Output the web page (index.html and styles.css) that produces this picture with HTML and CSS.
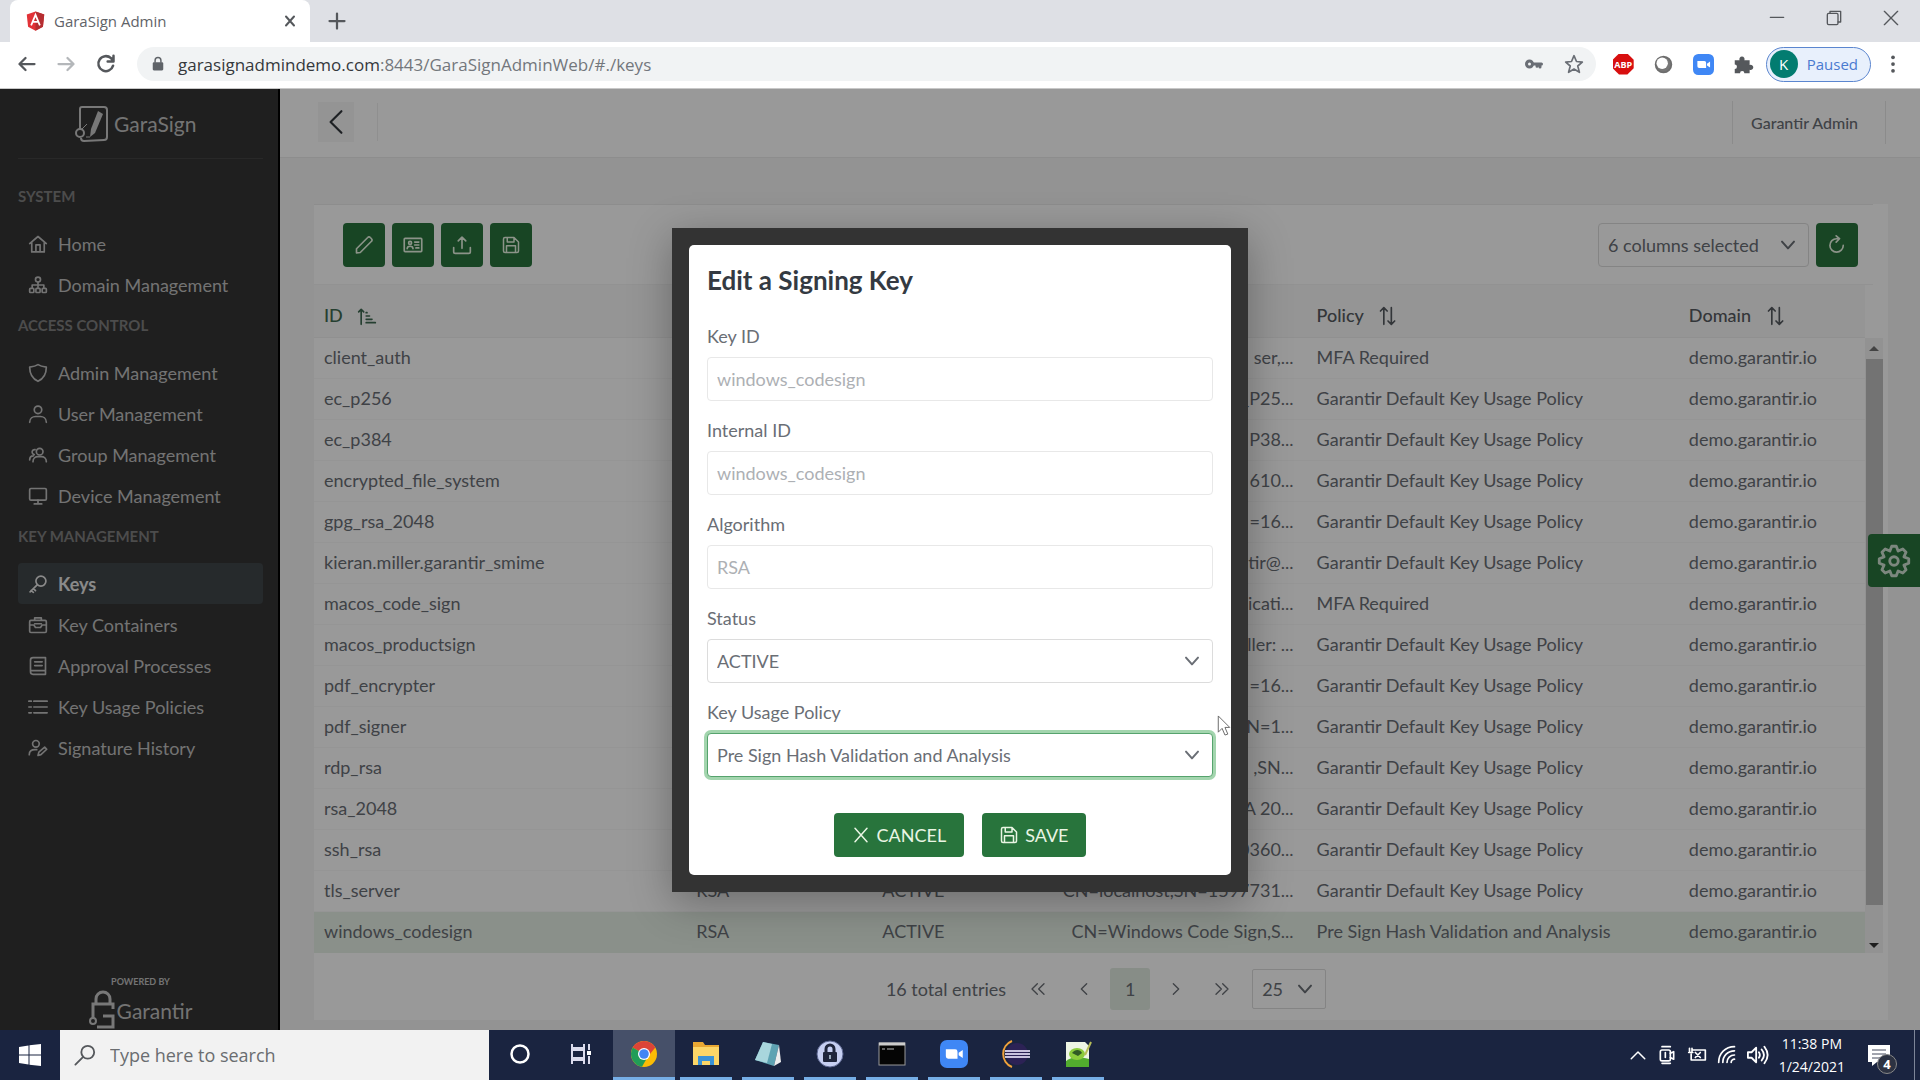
FILE: index.html
```html
<!DOCTYPE html>
<html lang="en">
  <head>
    <meta charset="utf-8" />
    <meta name="viewport" content="width=device-width, initial-scale=1.0" />
    <title>GaraSign Admin</title>
    <link rel="stylesheet" href="styles.css">
  </head>
  <body>
    <!-- Shared icons -->
    <svg class="icon-defs" aria-hidden="true">
      <symbol id="i-home" viewBox="0 0 24 24"><path d="M2 11.500L12 3l10 8.500M4.500 10v11.500h15V10M9.500 21v-8h5v8"/></symbol>
      <symbol id="i-sitemap" viewBox="0 0 24 24"><circle cx="12" cy="5.500" r="3"/><path d="M12 9v6M5 15v-3h14v3"/><rect x="2" y="16" width="5" height="5" rx="1"/><rect x="9.500" y="16" width="5" height="5" rx="1"/><rect x="17" y="16" width="5" height="5" rx="1"/></symbol>
      <symbol id="i-shield" viewBox="0 0 24 24"><path d="M12 2c3 2 6 2.500 10 3 0 8-4 14-10 17C6 19 2 13 2 5c4-.5 7-1 10-3z"/></symbol>
      <symbol id="i-user" viewBox="0 0 24 24"><circle cx="12" cy="7" r="4.500"/><path d="M2 22c0-5 4-7 7-7h6c3 0 7 2 7 7"/></symbol>
      <symbol id="i-users" viewBox="0 0 24 24"><circle cx="14" cy="8" r="4"/><path d="M6 20c0-4 3-6 6-6h4c3 0 6 2 6 6M8.500 5.500a3 3 0 1 0-1 6M2 18c0-3 1.500-5 4.500-5"/></symbol>
      <symbol id="i-desktop" viewBox="0 0 24 24"><rect x="2" y="3" width="20" height="14" rx="1.500"/><path d="M12 17v4M7.500 21.500h9"/></symbol>
      <symbol id="i-key" viewBox="0 0 24 24"><circle cx="15.500" cy="8.500" r="6"/><path d="M11 13l-8.500 8.500M3.500 20l3 2M6.500 17.500l2.500 2.500"/></symbol>
      <symbol id="i-case" viewBox="0 0 24 24"><rect x="2" y="6.500" width="20" height="14.500" rx="1.500"/><path d="M8 6V3.500h8V6M2 12h5l2 3h6l2-3h5M8 10.500h8"/></symbol>
      <symbol id="i-book" viewBox="0 0 24 24"><path d="M21 2H6a3 3 0 0 0-3 3v14a3 3 0 0 0 3 3h15zM3.500 17.500H21M8 7h9M8 11.500h9"/></symbol>
      <symbol id="i-list" viewBox="0 0 24 24"><path d="M1 5h3M1 12h3M1 19h3M7 5h16M7 12h16M7 19h16"/></symbol>
      <symbol id="i-useredit" viewBox="0 0 24 24"><circle cx="9.500" cy="7" r="4"/><path d="M1.500 20c0-4 3-6 7-6h2M12 21l1-4 7-6 2.500 2.500-7 6.500z"/></symbol>
      <symbol id="i-pencil" viewBox="0 0 24 24"><path d="M3 16.500L16.500 3a2 2 0 0 1 3 0l1.500 1.500a2 2 0 0 1 0 3L7.500 21 3 21.500z"/></symbol>
      <symbol id="i-idcard" viewBox="0 0 24 24"><rect x="1.500" y="4" width="21" height="16" rx="1"/><circle cx="8.500" cy="9.500" r="1.800"/><path d="M5 16.500c0-4 7-4 7 0M14 8.500h5M14 12h5M15.500 15.500H19"/></symbol>
      <symbol id="i-upload" viewBox="0 0 24 24"><path d="M2 15v5a2 2 0 0 0 2 2h16a2 2 0 0 0 2-2v-5M12 16V2.500M7.500 7L12 2.500 16.500 7"/></symbol>
      <symbol id="i-save" viewBox="0 0 24 24"><path d="M4 2h12l6 6v12a2 2 0 0 1-2 2H4a2 2 0 0 1-2-2V4a2 2 0 0 1 2-2zM7 2v6h9V2.500M6 22v-9h12v9"/></symbol>
      <symbol id="i-refresh" viewBox="0 0 24 24"><path d="M19.500 12.500a8 8 0 1 1-8-8h3M11 1l4 3.500-4 4"/></symbol>
      <symbol id="i-down" viewBox="0 0 24 24"><path d="M3 7l9 10 9-10"/></symbol>
      <symbol id="i-left" viewBox="0 0 24 24"><path d="M17 2L7 12l10 10"/></symbol>
      <symbol id="i-sort" viewBox="0 0 24 24"><path d="M7 22V2M3 6l4-4 4 4M16 2v20M12 18l4 4 4-4"/></symbol>
      <symbol id="i-sortup" viewBox="0 0 24 24"><path d="M5 22V4M2 7l3-3 3 3M11 8h1M11 12h4M11 16h7M11 20h11"/></symbol>
      <symbol id="i-times" viewBox="0 0 24 24"><path d="M4 3l16 18M20 3L4 21"/></symbol>
      <symbol id="i-search" viewBox="0 0 24 24"><circle cx="15" cy="9" r="7"/><path d="M10 14l-8.500 8.500"/></symbol>
      <symbol id="i-cog" viewBox="0 0 24 24"><path d="M22.400 10.400v3.200L19 14.900l1.500 3.300-2.300 2.300-3.300-1.500-1.300 3.400h-3.200L9.100 19l-3.300 1.500-2.300-2.300L5 14.900l-3.400-1.300v-3.200L5 9.100 3.500 5.800l2.300-2.300L9.100 5l1.300-3.400h3.200L14.900 5l3.300-1.500 2.300 2.300L19 9.100z"/><circle cx="12" cy="12" r="3"/></symbol>
      <symbol id="i-zoom" viewBox="0 0 24 24"><rect width="24" height="24" rx="6" fill="#3f87f5"/><path d="M5 8h8a2 2 0 0 1 2 2v6H7a2 2 0 0 1-2-2zM16 11l3.500-2.500v7L16 13z" fill="#fff"/></symbol>
    </svg>

    <!-- Browser window -->
    <div class="tab-strip">
      <div class="tab">
        <svg class="angular" viewBox="0 0 24 24"><path d="M12 1l10 3.500-1.500 14L12 23l-8.500-4.500L2 4.500z" fill="#e23237"/><path d="M12 1l10 3.500-1.500 14L12 23z" fill="#b52e31"/><path d="M7 17l5-12 5 12M9 13h6" fill="none" stroke="#fff" stroke-width="2"/></svg>
        <span class="tab-title">GaraSign Admin</span>
        <button class="chrome-btn" aria-label="Close tab"><svg class="icon s12 bold" ><use href="#i-times"/></svg></button>
      </div>
      <button class="chrome-btn new-tab" aria-label="New tab"><svg class="icon s18 heavy" viewBox="0 0 24 24"><path d="M12 2v20M2 12h20"/></svg></button>
      <div class="window-btns">
        <button class="chrome-btn" aria-label="Minimize"><svg class="icon s16" viewBox="0 0 24 24"><path d="M2 11h20"/></svg></button>
        <button class="chrome-btn" aria-label="Restore"><svg class="icon s16" viewBox="0 0 24 24"><rect x="2" y="5" width="16" height="17" rx="2"/><path d="M6 5V2h16v16h-4"/></svg></button>
        <button class="chrome-btn" aria-label="Close"><svg class="icon s16" viewBox="0 0 24 24"><path d="M2 2l20 20M22 2L2 22"/></svg></button>
      </div>
    </div>
    <div class="address-bar">
      <button class="chrome-btn" aria-label="Back"><svg class="icon s18 heavy" viewBox="0 0 24 24"><path d="M22 12H2M10 4l-8 8 8 8"/></svg></button>
      <button class="chrome-btn faded" aria-label="Forward"><svg class="icon s18 heavy" viewBox="0 0 24 24"><path d="M2 12h20M14 4l8 8-8 8"/></svg></button>
      <button class="chrome-btn" aria-label="Reload"><svg class="icon s20 heavy" viewBox="0 0 24 24"><path d="M20.500 14A9 9 0 1 1 18 5l2.500 3M21 2v7h-7"/></svg></button>
      <div class="url-box">
        <svg class="lock" viewBox="0 0 24 24"><rect x="3" y="9" width="18" height="14" rx="2" fill="#5f6368"/><path d="M7 10V6a5 5 0 0 1 10 0v4" fill="none" stroke="#5f6368" stroke-width="2.500"/></svg>
        <span class="url">garasignadmindemo.com<span class="url-path">:8443/GaraSignAdminWeb/#./keys</span></span>
        <svg class="icon s18 key bold" viewBox="0 0 24 24"><circle cx="6" cy="12" r="4"/><path d="M10.500 12H22M20 12v4M16 12v3"/></svg>
        <svg class="icon s20" viewBox="0 0 24 24"><path d="M12 2l3 7 7 .7-5.500 4.700 2 7.600-6.500-4-6.500 4 2-7.600L2 9.700 9 9z"/></svg>
      </div>
      <div class="extensions">
        <span class="abp">ABP</span>
        <svg class="ext" viewBox="0 0 24 24"><circle cx="12" cy="12" r="9" fill="#777" stroke="#6d6d6d" stroke-width="2"/><circle cx="10.500" cy="10.500" r="6.500" fill="#fff"/></svg>
        <svg class="ext"><use href="#i-zoom"/></svg>
        <svg class="ext" viewBox="0 0 24 24"><path d="M2 7h5.500a3 3 0 1 1 5.500 0h6v5.500a3 3 0 1 1 0 5.500v4H13a2.500 2.500 0 0 0-5 0H2v-5a2.500 2.500 0 0 0 0-5z" fill="#55585c"/></svg>
      </div>
      <button class="profile"><span class="avatar">K</span>Paused</button>
      <button class="chrome-btn menu" aria-label="Menu"><svg class="s18" viewBox="0 0 24 24"><circle cx="12" cy="3" r="2.500"/><circle cx="12" cy="12" r="2.500"/><circle cx="12" cy="21" r="2.500"/></svg></button>
    </div>

    <div class="page">
      <!-- Sidebar -->
      <aside class="sidebar">
        <div class="logo">
          <svg class="logo-mark" viewBox="0 0 34 38"><path d="M5 25V4q0-2 2-2h22q3 0 3 3v27q0 3-3 3L9 36q-3 0-3-3" fill="none" stroke="#c8c8c8" stroke-width="2"/><path d="M23 6l5 3-8 19-5 4 1-8z" fill="#c8c8c8"/><path d="M15 32H11M6 25l6-6" stroke="#c8c8c8"/><circle cx="5" cy="28" r="4" fill="none" stroke="#c8c8c8" stroke-width="2"/></svg>
          <span>GaraSign</span>
        </div>
        <nav>
          <h2>SYSTEM</h2>
          <a href="#home"><svg class="icon s20"><use href="#i-home"/></svg>Home</a>
          <a href="#domains"><svg class="icon s20"><use href="#i-sitemap"/></svg>Domain Management</a>
          <h2>ACCESS CONTROL</h2>
          <a href="#admins"><svg class="icon s20"><use href="#i-shield"/></svg>Admin Management</a>
          <a href="#users"><svg class="icon s20"><use href="#i-user"/></svg>User Management</a>
          <a href="#groups"><svg class="icon s20"><use href="#i-users"/></svg>Group Management</a>
          <a href="#devices"><svg class="icon s20"><use href="#i-desktop"/></svg>Device Management</a>
          <h2>KEY MANAGEMENT</h2>
          <a href="#keys" class="active"><svg class="icon s20"><use href="#i-key"/></svg>Keys</a>
          <a href="#containers"><svg class="icon s20"><use href="#i-case"/></svg>Key Containers</a>
          <a href="#approvals"><svg class="icon s20"><use href="#i-book"/></svg>Approval Processes</a>
          <a href="#policies"><svg class="icon s20"><use href="#i-list"/></svg>Key Usage Policies</a>
          <a href="#history"><svg class="icon s20"><use href="#i-useredit"/></svg>Signature History</a>
        </nav>
        <div class="powered">
          <small>POWERED BY</small>
          <div class="powered-logo">
            <svg viewBox="0 0 26 40"><path d="M7 13V9a7 7 0 0 1 14 0v4M4 28V14h20v5M14 26h10v11H8" fill="none" stroke="#c8c8c8" stroke-width="3"/><circle cx="4" cy="31" r="3" fill="none" stroke="#c8c8c8" stroke-width="2"/></svg>
            <span>Garantir</span>
          </div>
        </div>
      </aside>

      <!-- Main area -->
      <div class="main">
        <header class="topbar">
          <button class="toggle" aria-label="Collapse menu"><svg class="icon s26"><use href="#i-left"/></svg></button>
          <span class="account">Garantir Admin</span>
        </header>
        <main class="content">
          <div class="toolbar">
            <button class="btn square" aria-label="Edit"><svg class="icon s20"><use href="#i-pencil"/></svg></button>
            <button class="btn square" aria-label="Certificate"><svg class="icon s20"><use href="#i-idcard"/></svg></button>
            <button class="btn square" aria-label="Upload"><svg class="icon s20"><use href="#i-upload"/></svg></button>
            <button class="btn square" aria-label="Export"><svg class="icon s18"><use href="#i-save"/></svg></button>
            <div class="select columns">
              <select aria-label="Columns"><option>6 columns selected</option></select>
              <svg class="icon s16"><use href="#i-down"/></svg>
            </div>
            <button class="btn square" aria-label="Refresh"><svg class="icon s20"><use href="#i-refresh"/></svg></button>
          </div>
          <div class="table-wrap">
            <table>
              <colgroup><col class="wide"><col class="narrow"><col class="narrow"><col class="mid"><col class="wide"><col class="narrow"></colgroup>
              <thead>
                <tr><th class="sorted">ID <svg class="icon s20"><use href="#i-sortup"/></svg></th><th></th><th></th><th></th><th>Policy <svg class="icon s20"><use href="#i-sort"/></svg></th><th>Domain <svg class="icon s20"><use href="#i-sort"/></svg></th></tr>
              </thead>
              <tbody>
                <tr><td>client_auth</td><td></td><td></td><td>ser,...</td><td>MFA Required</td><td>demo.garantir.io</td></tr>
                <tr><td>ec_p256</td><td></td><td></td><td>_P25...</td><td>Garantir Default Key Usage Policy</td><td>demo.garantir.io</td></tr>
                <tr><td>ec_p384</td><td></td><td></td><td>P38...</td><td>Garantir Default Key Usage Policy</td><td>demo.garantir.io</td></tr>
                <tr><td>encrypted_file_system</td><td></td><td></td><td>610...</td><td>Garantir Default Key Usage Policy</td><td>demo.garantir.io</td></tr>
                <tr><td>gpg_rsa_2048</td><td></td><td></td><td>=16...</td><td>Garantir Default Key Usage Policy</td><td>demo.garantir.io</td></tr>
                <tr><td>kieran.miller.garantir_smime</td><td></td><td></td><td>tir@...</td><td>Garantir Default Key Usage Policy</td><td>demo.garantir.io</td></tr>
                <tr><td>macos_code_sign</td><td></td><td></td><td>icati...</td><td>MFA Required</td><td>demo.garantir.io</td></tr>
                <tr><td>macos_productsign</td><td></td><td></td><td>ller: ...</td><td>Garantir Default Key Usage Policy</td><td>demo.garantir.io</td></tr>
                <tr><td>pdf_encrypter</td><td></td><td></td><td>=16...</td><td>Garantir Default Key Usage Policy</td><td>demo.garantir.io</td></tr>
                <tr><td>pdf_signer</td><td></td><td></td><td>N=1...</td><td>Garantir Default Key Usage Policy</td><td>demo.garantir.io</td></tr>
                <tr><td>rdp_rsa</td><td></td><td></td><td>,SN...</td><td>Garantir Default Key Usage Policy</td><td>demo.garantir.io</td></tr>
                <tr><td>rsa_2048</td><td></td><td></td><td>A 20...</td><td>Garantir Default Key Usage Policy</td><td>demo.garantir.io</td></tr>
                <tr><td>ssh_rsa</td><td></td><td></td><td>0360...</td><td>Garantir Default Key Usage Policy</td><td>demo.garantir.io</td></tr>
                <tr><td>tls_server</td><td>RSA</td><td>ACTIVE</td><td>CN=localhost,SN=1597731...</td><td>Garantir Default Key Usage Policy</td><td>demo.garantir.io</td></tr>
                <tr class="selected"><td>windows_codesign</td><td>RSA</td><td>ACTIVE</td><td>CN=Windows Code Sign,S...</td><td>Pre Sign Hash Validation and Analysis</td><td>demo.garantir.io</td></tr>
              </tbody>
            </table>
            <div class="scrollbar">
              <span class="arrow up"></span>
              <span class="thumb"></span>
              <span class="arrow down"></span>
            </div>
          </div>
          <div class="paginator">
            <span class="total">16 total entries</span>
            <button aria-label="First page"><svg class="icon s16" viewBox="0 0 24 24"><path d="M11 4l-8 8 8 8M21 4l-8 8 8 8"/></svg></button>
            <button aria-label="Previous page"><svg class="icon s16" viewBox="0 0 24 24"><path d="M16 4l-8 8 8 8"/></svg></button>
            <button class="current">1</button>
            <button aria-label="Next page"><svg class="icon s16" viewBox="0 0 24 24"><path d="M8 4l8 8-8 8"/></svg></button>
            <button aria-label="Last page"><svg class="icon s16" viewBox="0 0 24 24"><path d="M3 4l8 8-8 8M13 4l8 8-8 8"/></svg></button>
            <div class="select size">
              <select aria-label="Rows per page"><option>25</option></select>
              <svg class="icon s16"><use href="#i-down"/></svg>
            </div>
          </div>
        </main>
        <button class="settings" aria-label="Settings"><svg class="icon s34"><use href="#i-cog"/></svg></button>
      </div>

      <!-- Edit dialog -->
      <div class="overlay">
        <div class="dialog" role="dialog" aria-labelledby="dialog-title">
          <form class="dialog-body">
            <h1 id="dialog-title">Edit a Signing Key</h1>
            <label for="key-id">Key ID</label>
            <input id="key-id" type="text" value="windows_codesign" disabled>
            <label for="internal-id">Internal ID</label>
            <input id="internal-id" type="text" value="windows_codesign" disabled>
            <label for="algorithm">Algorithm</label>
            <input id="algorithm" type="text" value="RSA" disabled>
            <label for="status">Status</label>
            <div class="select">
              <select id="status"><option>ACTIVE</option></select>
              <svg class="icon s16"><use href="#i-down"/></svg>
            </div>
            <label for="policy">Key Usage Policy</label>
            <div class="select focused">
              <select id="policy"><option>Pre Sign Hash Validation and Analysis</option></select>
              <svg class="icon s16"><use href="#i-down"/></svg>
            </div>
            <div class="actions">
              <button type="button" class="btn"><svg class="icon s18"><use href="#i-times"/></svg>CANCEL</button>
              <button type="button" class="btn"><svg class="icon s18"><use href="#i-save"/></svg>SAVE</button>
            </div>
          </form>
          <svg class="cursor" viewBox="0 0 14 22"><path d="M1 1v17l4-4 3 7 3-1-3-7h5z" fill="#fff" stroke="#666"/></svg>
        </div>
      </div>
    </div>

    <!-- Windows taskbar -->
    <footer class="taskbar">
      <button class="start" aria-label="Start"><svg viewBox="0 0 24 24"><path d="M1 4l9.500-1.500v9H1zM11.500 2.300L23 1v10.500H11.500zM1 12.500h9.500v9L1 20zM11.500 12.500H23V23l-11.500-1.300z" fill="#fff"/></svg></button>
      <label class="search" for="task-search">
        <svg class="icon s22"><use href="#i-search"/></svg>
        <input id="task-search" type="text" placeholder="Type here to search">
      </label>
      <button class="task plain" aria-label="Cortana"><svg viewBox="0 0 28 28"><circle cx="14" cy="14" r="8.500" fill="none" stroke="#fff" stroke-width="2.500"/></svg></button>
      <button class="task plain" aria-label="Task view"><svg viewBox="0 0 28 28"><path d="M4 4v4h12V4M4 24v-4h12v4M4 10h12v8H4zM21 4v6M21 16v8" fill="none" stroke="#dde" stroke-width="2"/><path d="M19 11h4v4h-4z" fill="#fff"/></svg></button>
      <button class="task open" aria-label="Chrome"><svg viewBox="0 0 28 28"><circle cx="14" cy="14" r="13" fill="#fbbc05"/><path d="M14 14L2.700 7.500A13 13 0 0 1 25.300 7.500z" fill="#dc4437"/><path d="M14 14L2.700 7.500A13 13 0 0 0 12 26.800l4-7z" fill="#219d58"/><path d="M14 7.500h11.300L20 14z" fill="#dc4437"/><circle cx="14" cy="14" r="6" fill="#fff"/><circle cx="14" cy="14" r="4.800" fill="#4285f4"/></svg></button>
      <button class="task" aria-label="File Explorer"><svg viewBox="0 0 28 28"><path d="M1 2h10l2 3h14v20H1z" fill="#e9a833"/><path d="M1 7h26v18H1z" fill="#fcd667"/><path d="M6 25v-9h16v9h-4v-4h-8v4z" fill="#3a92d6"/></svg></button>
      <button class="task" aria-label="Notepad"><svg viewBox="0 0 28 28"><path d="M9 2l16 3-5 21L1 20z" fill="#5fa3b3"/><path d="M9 2l9 2-5 19L1 20z" fill="#a9d6dd"/><path d="M25 5l2 17-7 4z" fill="#eee"/></svg></button>
      <button class="task" aria-label="KeePass"><svg viewBox="0 0 28 28"><circle cx="14" cy="14" r="13" fill="#c7d0f2" stroke="#5c6690"/><rect x="7" y="12" width="14" height="10" rx="1" fill="#20263c"/><path d="M10 13V9a4 4 0 0 1 8 0v4" fill="none" stroke="#20263c" stroke-width="3"/><path d="M14 15v4" stroke="#9ab" stroke-width="2"/></svg></button>
      <button class="task" aria-label="Command Prompt"><svg viewBox="0 0 28 28"><rect x="1" y="3" width="26" height="22" fill="#050505" stroke="#999"/><path d="M1 4h26" stroke="#ccc" stroke-width="3"/><path d="M4 9h3M9 9h7" stroke="#bbb"/></svg></button>
      <button class="task" aria-label="Zoom"><svg viewBox="0 0 24 24"><use href="#i-zoom"/></svg></button>
      <button class="task" aria-label="Eclipse"><svg viewBox="0 0 28 28"><circle cx="15" cy="14" r="11" fill="#2c2255"/><path d="M10 1A14 14 0 0 0 10 27" fill="none" stroke="#f0a23a" stroke-width="2"/><path d="M3 11h25M3 14h25M3 17h25" stroke="#c9c3dd" stroke-width="2"/></svg></button>
      <button class="task" aria-label="Notepad++"><svg viewBox="0 0 28 28"><path d="M2 2h19l4 4v21H2z" fill="#eef5e4"/><path d="M2 21c7-5 14-4 23-2v8H2z" fill="#52ad2e"/><ellipse cx="13" cy="14" rx="8" ry="6" fill="#8ccc3c"/><path d="M8 13c3-4 8-4 10 0l-4 3z" fill="#315a25"/><path d="M27 2l-6 13" stroke="#b7bd58" stroke-width="2"/></svg></button>
      <div class="tray">
        <svg class="icon s18" viewBox="0 0 24 24"><path d="M3 17l9-9 9 9"/></svg>
        <svg class="icon s20" viewBox="0 0 24 24"><rect x="4" y="6" width="12" height="13" rx="2"/><path d="M16 10l4-2v9l-4-2M6 2h10M6 22h10M10 9v6"/></svg>
        <svg class="icon s20" viewBox="0 0 24 24"><path d="M7 6h15v12H5v-7M3 4v5M6 4v5M2 9h5M10 9l6 6M16 9l-6 6"/></svg>
        <svg class="icon s20" viewBox="0 0 24 24"><path d="M2 21C2 10 10 2 21 2M7 21C7 13 13 7 21 7M12 21c0-5 4-9 9-9M17 21c0-2 2-4 4-4"/></svg>
        <svg class="icon s22" viewBox="0 0 24 24"><path d="M1 9v6h4l5 5V4L5 9zM13 9q2 3 0 6M16 6q5 6 0 12M19 3q7 9 0 18"/></svg>
        <div class="clock"><span>11:38 PM</span><span>1/24/2021</span></div>
        <div class="notifications">
          <svg viewBox="0 0 24 24"><path d="M1 2h22v17H10l-5 4v-4H1z" fill="#fff"/><path d="M5 7h14M5 11h14M5 15h9" stroke="#444a5c"/></svg>
          <span class="count">4</span>
        </div>
      </div>
    </footer>
  </body>
</html>
```
FILE: styles.css
```css
* {
  margin: 0;
  padding: 0;
  box-sizing: border-box;
}

body {
  height: 100vh;
  display: flex;
  flex-direction: column;
  overflow: hidden;
  font-family: Lato, "Open Sans", sans-serif;
  font-size: 18px;
  color: #6a6e75;
}

button, input, select {
  font: inherit;
  color: inherit;
  border: none;
  background: none;
}

svg {
  display: block;
  flex-shrink: 0;
}

/* Icons */
.icon-defs {
  position: absolute;
  width: 0;
  height: 0;
}

.icon {
  fill: none;
  stroke: currentColor;
  stroke-width: 2;
  stroke-linecap: round;
  stroke-linejoin: round;
}

.bold { stroke-width: 4; }
.heavy { stroke-width: 3; }
.s12 { width: 12px; height: 12px; }
.s16 { width: 16px; height: 16px; }
.s18 { width: 18px; height: 18px; }
.s20 { width: 20px; height: 20px; }
.s22 { width: 22px; height: 22px; }
.s26 { width: 26px; height: 26px; }
.s34 { width: 34px; height: 34px; }

/* Browser */
.tab-strip, .address-bar {
  font-family: "Open Sans", sans-serif;
  display: flex;
  align-items: center;
  flex-shrink: 0;
}

.tab-strip {
  height: 42px;
  background: #dee0e5;
  padding-left: 10px;
}

.tab {
  width: 300px;
  height: 42px;
  display: flex;
  align-items: center;
  gap: 8px;
  padding: 0 14px 0 15px;
  background: #fff;
  border-radius: 8px 8px 0 0;
}

.angular {
  width: 21px;
  height: 22px;
}

.tab-title {
  flex: 1;
  font-size: 15px;
  color: #5f6368;
}

.chrome-btn {
  display: grid;
  place-items: center;
  color: #55585c;
}

.new-tab {
  margin-left: 18px;
}

.window-btns {
  margin-left: auto;
  display: flex;
  gap: 41px;
  padding: 0 21px 6px 0;
}

.address-bar {
  height: 47px;
  background: #fff;
  padding: 0 17px 2px 18px;
  gap: 21px;
  border-bottom: 1px solid #c8c8c8;
}

.faded {
  color: #b4b7ba;
}

.url-box {
  flex: 1;
  height: 34px;
  display: flex;
  align-items: center;
  padding: 0 12px 0 14px;
  background: #f1f3f4;
  border-radius: 17px;
}

.lock {
  width: 14px;
  height: 16px;
  margin-right: 13px;
}

.url {
  flex: 1;
  font-size: 17px;
  color: #35383c;
}

.url-path {
  color: #73777c;
}

.key {
  margin-right: 21px;
}

.extensions {
  display: flex;
  gap: 19px;
  margin-left: -4px;
}

.ext {
  width: 21px;
  height: 21px;
}

.abp {
  width: 21px;
  height: 21px;
  background: #d80f0f;
  color: #fff;
  font-size: 9px;
  font-weight: bold;
  line-height: 21px;
  text-align: center;
  clip-path: polygon(30% 0, 70% 0, 100% 30%, 100% 70%, 70% 100%, 30% 100%, 0 70%, 0 30%);
}

.profile {
  display: flex;
  align-items: center;
  gap: 9px;
  height: 35px;
  padding: 0 12px 0 3px;
  margin-left: -9px;
  border: 1px solid #5b86cf;
  border-radius: 18px;
  background: #e8f0fc;
  color: #4a7ad0;
  font-size: 15px;
}

.avatar {
  width: 28px;
  height: 28px;
  border-radius: 50%;
  background: #027c70;
  color: #fff;
  line-height: 28px;
}

.menu {
  margin-left: -9px;
  width: 20px;
  fill: #55585c;
}

/* App */
.page {
  position: relative;
  flex: 1;
  min-height: 0;
  display: flex;
}

.sidebar {
  width: 280px;
  display: flex;
  flex-direction: column;
  padding: 0 15px 0 18px;
  background: #353535;
  color: #c0c0c0;
  border-right: 2px solid #000;
}

.logo {
  height: 70px;
  display: flex;
  align-items: center;
  gap: 5px;
  padding-left: 57px;
  margin-bottom: 17px;
  border-bottom: 1px solid #444;
  font-size: 21px;
}

.logo-mark {
  width: 34px;
  height: 38px;
}

.sidebar h2 {
  height: 47px;
  padding-top: 8px;
  line-height: 24px;
  font-size: 15px;
  font-weight: bold;
  color: #7f7f7f;
}

.sidebar nav a {
  height: 41px;
  display: flex;
  align-items: center;
  gap: 10px;
  padding-left: 10px;
  color: inherit;
  text-decoration: none;
  border-radius: 4px;
}

.sidebar nav a.active {
  background: #40474a;
  color: #e6e6e6;
  font-weight: bold;
}

.powered {
  margin-top: auto;
  text-align: center;
}

.powered small {
  display: block;
  font-size: 9px;
  font-weight: bold;
  line-height: 16px;
}

.powered-logo {
  display: flex;
  align-items: center;
  justify-content: center;
  gap: 2px;
  font-size: 21px;
}

.powered-logo svg {
  width: 26px;
  height: 40px;
}

.main {
  position: relative;
  flex: 1;
  min-width: 0;
  display: flex;
  flex-direction: column;
  background: #f5f5f5;
}

.topbar {
  height: 69px;
  display: flex;
  align-items: center;
  justify-content: space-between;
  padding: 0 34px 2px 38px;
  background: #fff;
  border-bottom: 1px solid #ebebeb;
}

.toggle {
  width: 36px;
  height: 40px;
  display: grid;
  place-items: center;
  background: #f7f7f7;
  color: #33373c;
  box-shadow: 24px 0 0 -1px #fff, 25px 0 0 -1px #eee;
}

.account {
  padding: 0 27px 0 18px;
  line-height: 43px;
  font-size: 16px;
  font-weight: 500;
  border-left: 1px solid #e8e8e8;
  border-right: 1px solid #e8e8e8;
}

.content {
  flex: 1;
  display: flex;
  flex-direction: column;
  margin: 46px 32px 10px 34px;
  background: #fff;
}

.toolbar {
  display: flex;
  align-items: center;
  gap: 7px;
  margin-right: 15px;
  padding: 18px 15px 17px 29px;
  border-top: 1px solid #ebebeb;
  border-bottom: 1px solid #f4f4f4;
}

.btn {
  height: 44px;
  display: flex;
  align-items: center;
  justify-content: center;
  gap: 7px;
  padding: 0 18px;
  background: #28743c;
  color: #e9f5e4;
  border-radius: 4px;
}

.square {
  width: 42px;
  padding: 0;
}

.select {
  position: relative;
  height: 44px;
}

.select select {
  appearance: none;
  width: 100%;
  height: 100%;
  padding: 0 40px 0 9px;
  border: 1px solid #dcdcdc;
  border-radius: 4px;
  background: #fff;
}

.select .icon {
  position: absolute;
  right: 13px;
  top: 50%;
  transform: translateY(-50%);
  stroke-width: 3;
  pointer-events: none;
}

.columns {
  width: 211px;
  margin-left: auto;
}

.table-wrap {
  display: flex;
  padding-right: 5px;
}

table {
  flex: 1;
  min-width: 0;
  table-layout: fixed;
  border-collapse: separate;
  border-spacing: 0;
}

.wide { width: 24%; }
.mid { width: 16%; }
.narrow { width: 12%; }

th {
  height: 53px;
  padding: 8px 0 0 10px;
  text-align: left;
  font-weight: 500;
  background: #f8f8f8;
  color: #555a60;
  border-bottom: 1px solid #f0f0f0;
}

th .icon {
  display: inline-block;
  vertical-align: -4px;
  margin-left: 10px;
}

.sorted {
  color: #3f6a52;
}

td {
  height: 41px;
  padding: 0 10px 3px;
  white-space: nowrap;
  overflow: hidden;
  border-bottom: 1px solid #f8f8f8;
}

td:nth-child(4) {
  text-align: right;
  padding-right: 13px;
  padding-left: 0;
}

.selected td {
  background: #e6f0e6;
  border-color: #e6f0e6;
}

.scrollbar {
  width: 18px;
  margin-top: 53px;
  display: flex;
  flex-direction: column;
  align-items: center;
  background: #f4f4f4;
}

.thumb {
  width: 17px;
  flex: 1;
  background: #c0c0c0;
}

.arrow {
  height: 21px;
  display: grid;
  place-items: center;
}

.arrow::before {
  content: "";
  border: 5px solid transparent;
}

.up::before {
  border-bottom-color: #707070;
  border-top: none;
}

.down {
  height: 48px;
  padding-top: 32px;
}

.down::before {
  border-top-color: #333;
  border-bottom: none;
}

.paginator {
  flex: 1;
  display: flex;
  align-items: center;
  justify-content: center;
  gap: 6px;
  padding: 5px 0 0 10px;
}

.total {
  margin-right: 6px;
}

.paginator button {
  width: 40px;
  height: 42px;
  display: grid;
  place-items: center;
}

.paginator .current {
  background: #e2ebe2;
  border-radius: 3px;
}

.size {
  width: 74px;
  height: 40px;
  margin-left: 4px;
}

.size select {
  border-radius: 2px;
}

.settings {
  position: absolute;
  right: 0;
  top: 445px;
  width: 52px;
  height: 53px;
  display: grid;
  place-items: center;
  background: #28743c;
  color: #cfe2d3;
  border-radius: 4px 0 0 4px;
}

/* Dialog */
.overlay {
  position: absolute;
  inset: 0;
  display: grid;
  place-items: center;
  background: rgba(0, 0, 0, 0.4);
}

.dialog {
  position: relative;
  width: 576px;
  padding: 17px;
  background: #333;
  box-shadow: 0 10px 40px rgba(0, 0, 0, 0.3);
}

.dialog-body {
  padding: 17px 18px 18px;
  background: #fff;
  border-radius: 5px;
  display: flex;
  flex-direction: column;
}

.dialog h1 {
  margin-bottom: 23px;
  line-height: 36px;
  font-size: 26px;
  font-weight: bold;
  color: #343a42;
}

.dialog label {
  margin-bottom: 6px;
  line-height: 30px;
}

.dialog input {
  height: 44px;
  padding: 0 9px;
  border: 1px solid #e8e8e8;
  border-radius: 4px;
  color: #adb0b4;
}

.dialog input, .dialog .select {
  margin-bottom: 14px;
}

.focused select {
  border-color: #56a36d;
  outline: none;
  box-shadow: 0 0 0 3px #a3d5ae;
}

.actions {
  display: flex;
  justify-content: center;
  gap: 18px;
  margin-top: 22px;
}

.cursor {
  position: absolute;
  left: 545px;
  top: 487px;
  width: 14px;
  height: 21px;
}

/* Taskbar */
.taskbar {
  height: 50px;
  flex-shrink: 0;
  display: flex;
  background: #1a2440;
  color: #fff;
  font-family: "Open Sans", sans-serif;
}

.start {
  width: 60px;
  display: grid;
  place-items: center;
}

.start svg {
  width: 24px;
  height: 24px;
}

.search {
  width: 429px;
  display: flex;
  align-items: center;
  gap: 14px;
  padding-left: 14px;
  background: #f2f2f2;
  color: #55585c;
}

.search input {
  flex: 1;
}

.search input::placeholder {
  color: #6a6d70;
}

.task {
  width: 52px;
  margin: 0 5px;
  display: grid;
  place-items: center;
  border-bottom: 3px solid #76aee6;
}

.task svg {
  width: 28px;
  height: 28px;
}

.plain {
  border-color: transparent;
}

.open {
  width: 62px;
  margin: 0;
  background: #465069;
}

.tray {
  margin-left: auto;
  display: flex;
  align-items: center;
  gap: 10px;
  margin-right: 5px;
  padding-right: 23px;
  border-right: 1px solid #7d8598;
}

.clock {
  display: flex;
  flex-direction: column;
  align-items: center;
  line-height: 23px;
  font-size: 14px;
}

.notifications {
  position: relative;
  margin-left: 12px;
}

.notifications svg {
  width: 24px;
  height: 26px;
}

.count {
  position: absolute;
  left: 10px;
  top: 12px;
  width: 20px;
  height: 20px;
  border: 1px solid #888;
  border-radius: 50%;
  background: #2c3242;
  font-size: 13px;
  font-weight: bold;
  line-height: 18px;
  text-align: center;
}
```
